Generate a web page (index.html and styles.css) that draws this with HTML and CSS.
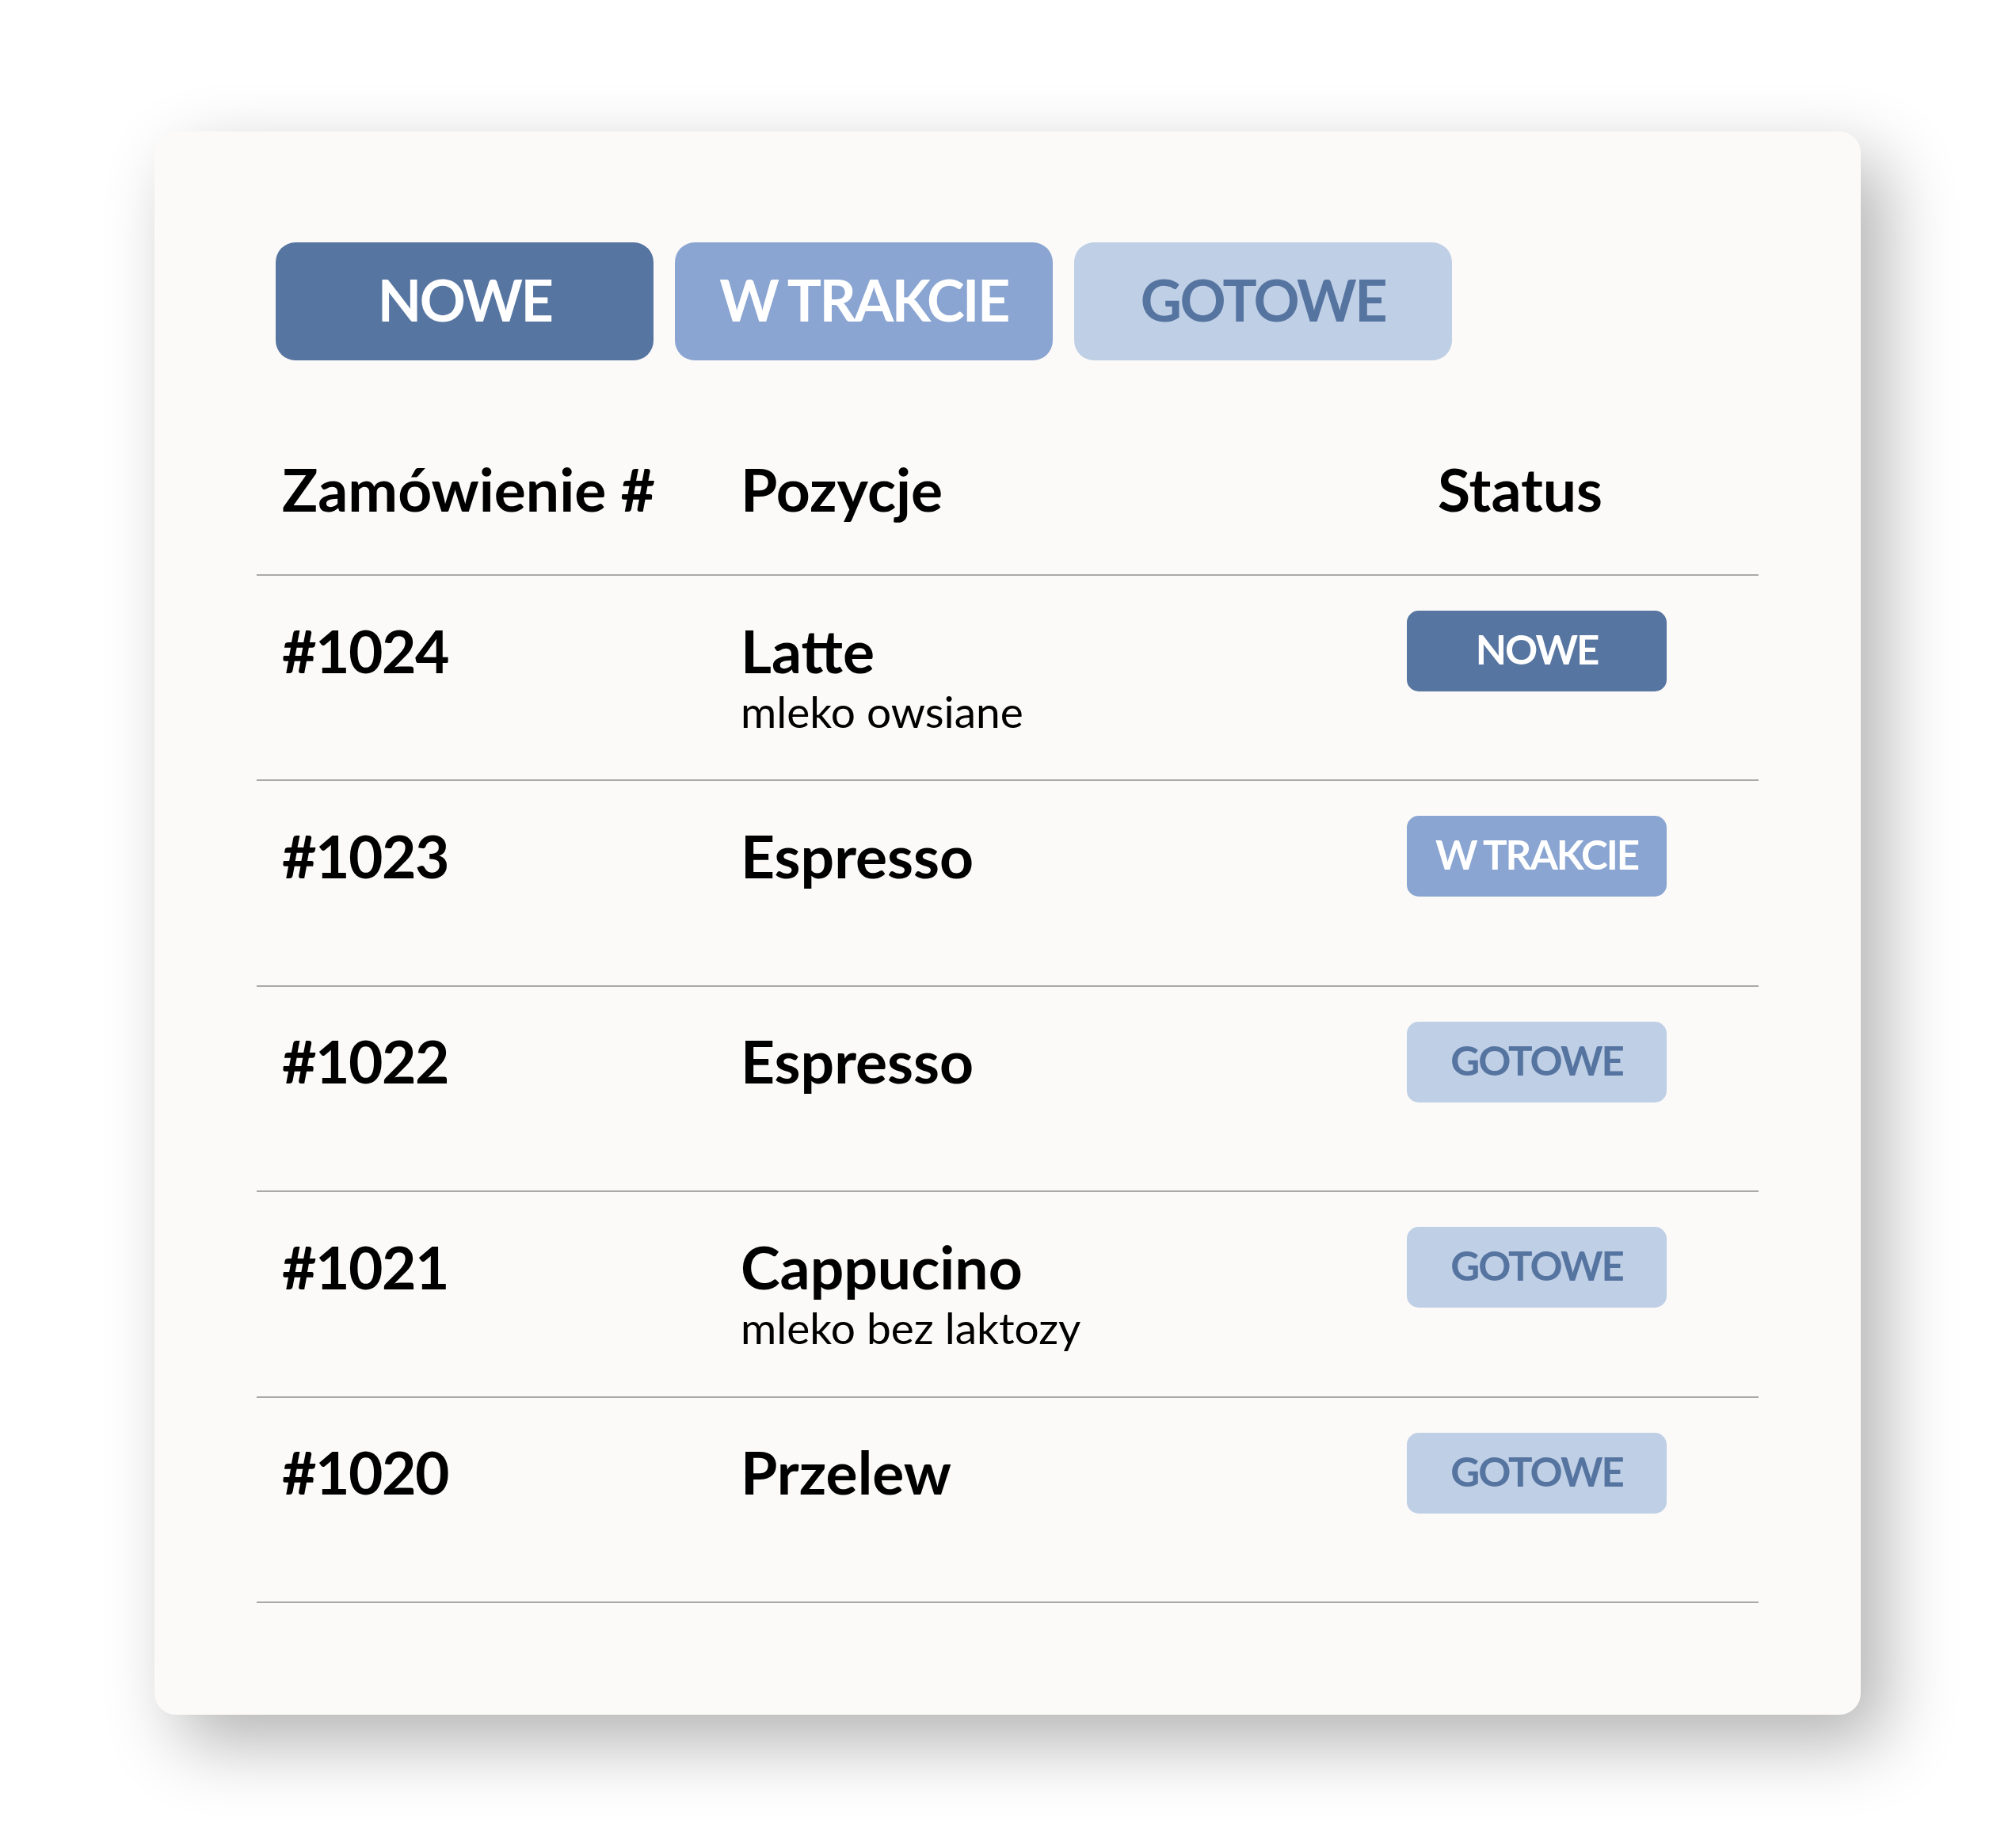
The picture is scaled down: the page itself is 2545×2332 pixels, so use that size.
FILE: index.html
```html
<!DOCTYPE html>
<html lang="pl">
<head>
<meta charset="utf-8">
<title>Zamówienia</title>
<link rel="stylesheet" href="styles.css">
</head>
<body>
<div class="card">
  <div class="tabs">
    <div class="tab tab-new">NOWE</div>
    <div class="tab tab-progress">W TRAKCIE</div>
    <div class="tab tab-done">GOTOWE</div>
  </div>
  <div class="table">
    <div class="row head">
      <div class="cell">Zamówienie #</div>
      <div class="cell">Pozycje</div>
      <div class="cell status-head">Status</div>
    </div>
    <div class="row">
      <div class="cell order-id">#1024</div>
      <div class="cell"><div class="name">Latte</div><div class="note">mleko owsiane</div></div>
      <div class="cell badge-cell"><div class="badge badge-new">NOWE</div></div>
    </div>
    <div class="row">
      <div class="cell order-id">#1023</div>
      <div class="cell"><div class="name">Espresso</div></div>
      <div class="cell badge-cell"><div class="badge badge-progress">W TRAKCIE</div></div>
    </div>
    <div class="row">
      <div class="cell order-id">#1022</div>
      <div class="cell"><div class="name">Espresso</div></div>
      <div class="cell badge-cell"><div class="badge badge-done">GOTOWE</div></div>
    </div>
    <div class="row">
      <div class="cell order-id">#1021</div>
      <div class="cell"><div class="name">Cappucino</div><div class="note">mleko bez laktozy</div></div>
      <div class="cell badge-cell"><div class="badge badge-done">GOTOWE</div></div>
    </div>
    <div class="row">
      <div class="cell order-id">#1020</div>
      <div class="cell"><div class="name">Przelew</div></div>
      <div class="cell badge-cell"><div class="badge badge-done">GOTOWE</div></div>
    </div>
  </div>
</div>
</body>
</html>
```

FILE: styles.css
```css
html, body {
  margin: 0;
  padding: 0;
  background: #ffffff;
}

body {
  box-sizing: border-box;
  min-height: 2332px;
  padding: 166px 0 0 195px;
  font-family: "Lato", "Noto Sans", sans-serif;
  color: #000000;
}

.card {
  box-sizing: border-box;
  width: 2154px;
  height: 1999px;
  padding: 140px 129px 0 129px;
  background: #fbfaf8;
  border-radius: 27px;
  box-shadow: 30px 35px 90px rgba(0, 0, 0, 0.3);
}

.tabs {
  display: flex;
  gap: 27px;
  margin-left: 24px;
}

.tab {
  box-sizing: border-box;
  width: 477px;
  height: 149px;
  border-radius: 25px;
  display: flex;
  align-items: center;
  justify-content: center;
  padding-bottom: 6px;
  font-size: 72px;
  line-height: 72px;
  font-weight: 700;
  letter-spacing: -2.5px;
}

.tab-new { background: #5775a1; color: #ffffff; }
.tab-progress { background: #8aa5d1; color: #ffffff; }
.tab-done { background: #bfcfe5; color: #5674a0; }

.table {
  width: 100%;
}

.row {
  box-sizing: border-box;
  display: grid;
  grid-template-columns: 579px 841px 328px;
  padding-left: 32px;
  height: 259.4px;
  border-bottom: 2px solid #a9a9a9;
  font-size: 75px;
  line-height: 75px;
  font-weight: 700;
}

.row .cell {
  padding-top: 56.5px;
}

.row .order-id {
  letter-spacing: -1.5px;
}

.row.head {
  height: 272px;
}

.row.head .cell {
  padding-top: 124.5px;
}

.row.head .status-head {
  padding-left: 39px;
}

.note {
  font-size: 55px;
  line-height: 78px;
  font-weight: 400;
}

.row .badge-cell {
  padding-top: 44px;
}

.badge {
  box-sizing: border-box;
  width: 328px;
  height: 102px;
  border-radius: 15px;
  display: flex;
  align-items: center;
  justify-content: center;
  padding-bottom: 5px;
  font-size: 51px;
  line-height: 51px;
  font-weight: 700;
  letter-spacing: -2px;
}

.badge-new { background: #5775a1; color: #ffffff; }
.badge-progress { background: #8aa5d1; color: #ffffff; }
.badge-done { background: #bfcfe5; color: #5674a0; }
```
